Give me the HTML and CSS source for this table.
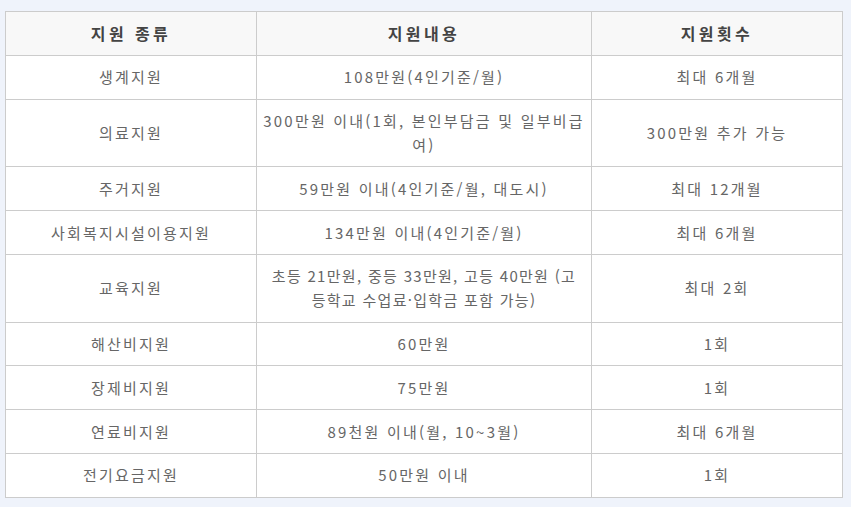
FILE: index.html
```html
<!DOCTYPE html>
<html lang="ko">
<head>
<meta charset="utf-8">
<link rel="stylesheet" href="styles.css">
</head>
<body>
<table class="support">
  <colgroup>
    <col class="c1">
    <col class="c2">
    <col class="c3">
  </colgroup>
  <thead>
    <tr><th>지원 종류</th><th>지원내용</th><th>지원횟수</th></tr>
  </thead>
  <tbody>
    <tr><td>생계지원</td><td>108만원(4인기준/월)</td><td>최대 6개월</td></tr>
    <tr><td>의료지원</td><td class="nowrap">300만원 이내(1회, 본인부담금 및 일부비급<br>여)</td><td>300만원 추가 가능</td></tr>
    <tr><td>주거지원</td><td>59만원 이내(4인기준/월, 대도시)</td><td>최대 12개월</td></tr>
    <tr><td>사회복지시설이용지원</td><td>134만원 이내(4인기준/월)</td><td>최대 6개월</td></tr>
    <tr><td>교육지원</td><td class="nowrap tight">초등 21만원, 중등 33만원, 고등 40만원 (고<br>등학교 수업료·입학금 포함 가능)</td><td>최대 2회</td></tr>
    <tr><td>해산비지원</td><td>60만원</td><td>1회</td></tr>
    <tr><td>장제비지원</td><td>75만원</td><td>1회</td></tr>
    <tr><td>연료비지원</td><td>89천원 이내(월, 10~3월)</td><td>최대 6개월</td></tr>
    <tr><td>전기요금지원</td><td>50만원 이내</td><td>1회</td></tr>
  </tbody>
</table>
</body>
</html>
```
FILE: styles.css
```css
html, body {
  margin: 0;
  padding: 0;
  background: #eff3fb;
}
body {
  padding: 11px 0 0 5px;
  font-family: "Noto Sans CJK KR", "Noto Sans", sans-serif;
}
.support {
  border-collapse: collapse;
  width: 838px;
  table-layout: fixed;
  background: #ffffff;
}
.c1 { width: 251px; }
.c2 { width: 335px; }
.c3 { width: 251px; }
.support th,
.support td {
  border: 1px solid #cccccc;
  text-align: center;
  vertical-align: middle;
  font-size: 15px;
  line-height: 24px;
  padding: 9.4px 4px;
  letter-spacing: 2.2px;
}
.support th {
  background: #f8f8f8;
  color: #444444;
  font-weight: bold;
  font-size: 16px;
  letter-spacing: 3.4px;
}
.support td {
  color: #666666;
  font-weight: normal;
}
.support td.nowrap {
  white-space: nowrap;
}
.support td.tight {
  letter-spacing: 1.3px;
}
```
